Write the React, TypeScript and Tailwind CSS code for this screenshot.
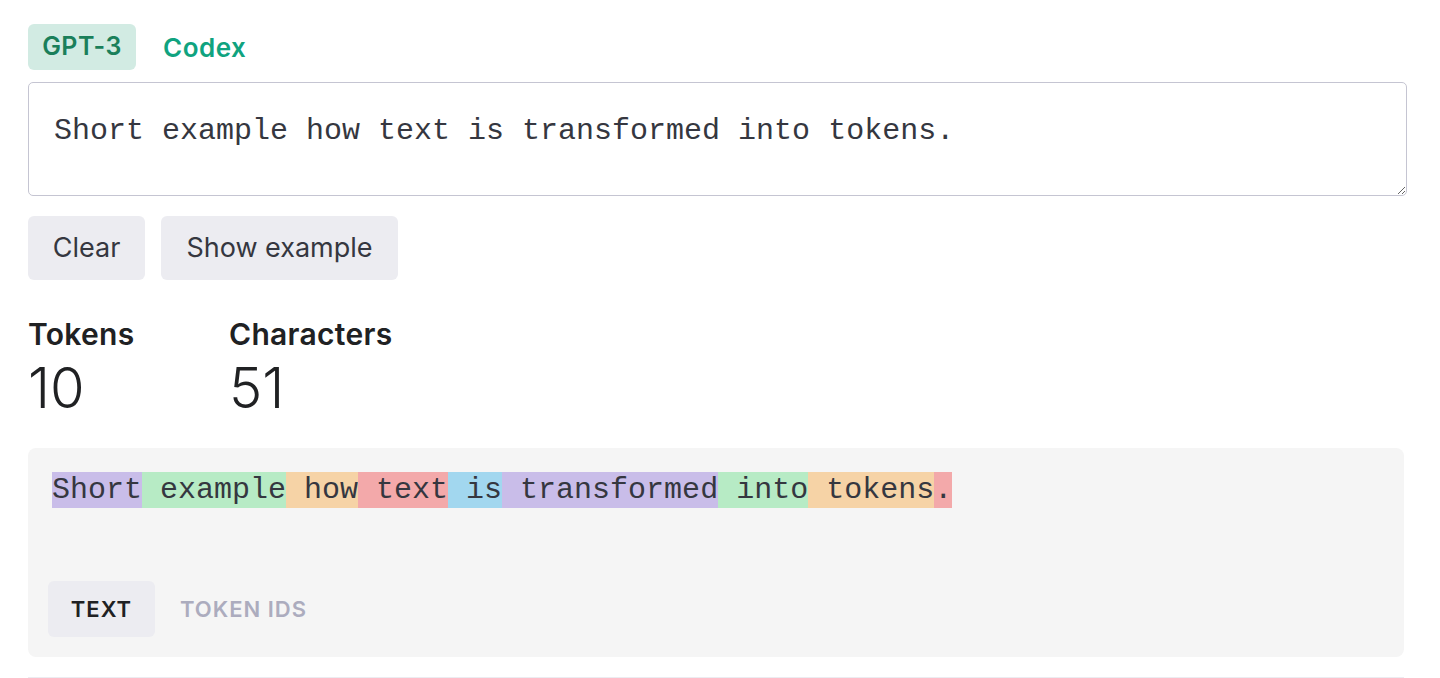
import React from "react";

const tokens: { t: string; c: string }[] = [
  { t: "Short", c: "bg-[#c9bde9]" },
  { t: " example", c: "bg-[#b7ebc5]" },
  { t: " how", c: "bg-[#f6d3a6]" },
  { t: " text", c: "bg-[#f3a9aa]" },
  { t: " is", c: "bg-[#a2d7ef]" },
  { t: " transformed", c: "bg-[#c9bde9]" },
  { t: " into", c: "bg-[#b7ebc5]" },
  { t: " tokens", c: "bg-[#f6d3a6]" },
  { t: ".", c: "bg-[#f3a9aa]" },
];

const mono = { fontFamily: "'Liberation Mono', 'DejaVu Sans Mono', monospace" };

export default function App() {
  return (
    <div
      className="min-h-[678px] bg-white pl-[28px] pr-[32px] pt-[24px] text-[#353740]"
      style={{ fontFamily: "Inter, 'Noto Sans', sans-serif" }}
    >
      <div className="flex items-center gap-[8px]">
        <button className="h-[46px] w-[108px] rounded-[6px] bg-[#d2ebe3] text-[25px] font-semibold tracking-[0.02em] text-[#1a7f5a]">
          GPT-3
        </button>
        <button className="h-[46px] px-[19px] text-[26px] font-semibold tracking-[0.02em] text-[#10a37f]">
          Codex
        </button>
      </div>

      <textarea
        readOnly
        className="mt-[12px] block h-[114px] w-[1379px] resize-y rounded-[5px] border border-[#c5c5d2] bg-white px-[25px] pt-[30px] text-[30px] leading-[36px] text-[#353740] outline-none"
        style={mono}
        value="Short example how text is transformed into tokens."
      />

      <div className="mt-[20px] flex gap-[16px]">
        <button className="h-[64px] w-[117px] rounded-[6px] bg-[#ececf1] text-[27px] text-[#353740]">
          Clear
        </button>
        <button className="h-[64px] w-[237px] rounded-[6px] bg-[#ececf1] text-[27px] text-[#353740]">
          Show example
        </button>
      </div>

      <div className="mt-[36px] flex text-[#202123]">
        <div className="flex w-[201px] flex-col">
          <div className="text-[30px] font-semibold leading-[36px] tracking-[0.01em]">Tokens</div>
          <div className="mt-[6px] text-[56px] font-light leading-[60px]">10</div>
        </div>
        <div className="flex flex-col">
          <div className="text-[30px] font-semibold leading-[36px] tracking-[0.01em]">Characters</div>
          <div className="mt-[6px] text-[56px] font-light leading-[60px]">51</div>
        </div>
      </div>

      <div className="mt-[30px] w-[1376px] rounded-[8px] bg-[#f5f5f5]">
        <div
          className="min-h-[133px] px-[24px] pt-[24px] text-[30px] leading-[36px] text-[#353740]"
          style={{ ...mono, whiteSpace: "pre" }}
        >
          {tokens.map((tk, i) => (
            <span key={i} className={`inline-block h-[36px] leading-[36px] ${tk.c}`}>
              {tk.t}
            </span>
          ))}
        </div>
        <div className="flex items-center gap-[4px] px-[20px] pb-[20px]">
          <button className="h-[56px] w-[107px] rounded-[6px] bg-[#ececf1] text-[22px] font-semibold tracking-[0.045em] text-[#202123]">
            TEXT
          </button>
          <button className="h-[56px] px-[21px] text-[22px] font-semibold tracking-[0.045em] text-[#acacbe]">
            TOKEN IDS
          </button>
        </div>
      </div>

      <div className="mt-[20px] w-[1376px] border-t border-[#ececf1]" />
    </div>
  );
}
